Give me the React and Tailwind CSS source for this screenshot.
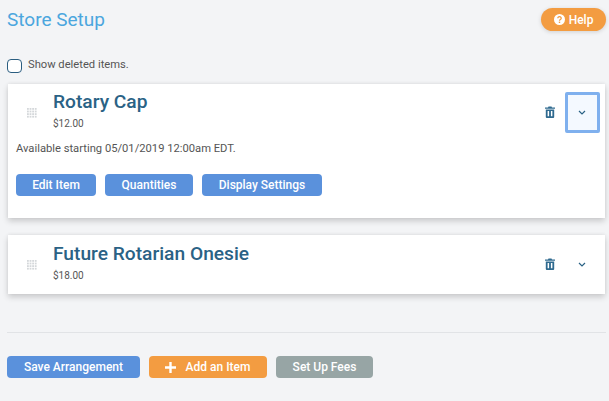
import React from "react";

function Grip() {
  const dots = [];
  for (let y = 0; y < 4; y++) for (let x = 0; x < 4; x++) dots.push(<rect key={`${x}-${y}`} x={x * 2.600} y={y * 2.600} width="1.800" height="1.800" fill="#d4d7da" />);
  return <svg width="10" height="10" viewBox="0 0 10 10" className="block">{dots}</svg>;
}

function Trash() {
  return (
    <svg width="10" height="12" viewBox="0 0 10 12" className="block">
      <path d="M3.500 0.500h3l.5 1H10v1.200H0V1.500h3z" fill="#2f6a8f" />
      <path fillRule="evenodd" d="M.8 3.400h8.400V11a1 1 0 0 1-1 1H1.800a1 1 0 0 1-1-1zM2.600 5v5.300h1.500V5zM5.900 5v5.300h1.500V5z" fill="#2f6a8f" />
    </svg>
  );
}

function Chevron() {
  return (
    <svg width="8" height="5" viewBox="0 0 8 5" className="block">
      <path d="M1 1l3 3 3-3" fill="none" stroke="#2a6285" strokeWidth="1.200" />
    </svg>
  );
}

function Card({ name, price, open, children }) {
  return (
    <div className="bg-white ml-2 mr-1 shadow-[0_3px_6px_rgba(0,0,0,0.18),0_-1px_3px_rgba(0,0,0,0.05)]">
      <div className={open ? "flex items-center h-[59px] pb-[2px]" : "flex items-center h-[59px]"}>
        <div className="w-[45px] pl-[19px] shrink-0"><Grip /></div>
        <div className="flex-1 min-w-0 pb-[5px]">
          <div className="text-[19.200px] leading-[24px] pt-px font-medium text-[#2a6285]">{name}</div>
          <div className="text-[10px] leading-[14px] mt-[3px] text-[#555555]">{price}</div>
        </div>
        <div className="mr-[10px] -mt-[2px]"><Trash /></div>
        <div className={open
          ? "w-[35px] h-[41px] mr-[5px] pr-px flex items-center justify-center bg-[#f4f9ff] border-[3px] border-[#7fb0ee] rounded-[2px]"
          : "w-[35px] h-[41px] mr-[5px] pr-px flex items-center justify-center"}><Chevron /></div>
      </div>
      {children}
    </div>
  );
}

function Btn({ className, children }) {
  return <div className={`h-[22px] flex items-center justify-center rounded-[4px] text-white text-[12px] font-medium ${className}`}>{children}</div>;
}

export default function App() {
  return (
    <div className="w-[609px] h-[401px] overflow-hidden bg-[#f3f4f6] font-['Roboto',sans-serif] flex flex-col">
      <div className="flex items-start justify-between h-[59px] pl-[7px] pr-[3px] pt-2">
        <div className="text-[19px] leading-[23px] text-[#4ba6de]">Store Setup</div>
        <div className="w-[65px] h-[23px] rounded-full bg-[#f39c41] text-white text-[12px] font-medium flex items-center justify-center gap-1 shadow-[0_1px_4px_rgba(0,0,0,0.15)]">
          <svg width="11" height="11" viewBox="0 0 11 11">
            <circle cx="5.500" cy="5.500" r="5.500" fill="#fff" />
            <path d="M3.800 4.200a1.700 1.500 0 1 1 2.600 1.300c-.6.4-.9.6-.9 1.200" fill="none" stroke="#f39c41" strokeWidth="1.300" />
            <rect x="4.800" y="7.600" width="1.400" height="1.400" fill="#f39c41" />
          </svg>
          Help
        </div>
      </div>
      <div className="flex items-center h-[14px] pl-[7px] gap-[6px]">
        <div className="w-[15px] h-[14px] rounded-[4px] border border-[#2a5d80] bg-white" />
        <div className="text-[11.200px] leading-[14px] -mt-[2px] text-[#555555]">Show deleted items.</div>
      </div>
      <div className="h-[11px] shrink-0" />
      <Card name="Rotary Cap" price="$12.00" open>
        <div className="pl-2 pb-[22px]">
          <div className="text-[11.200px] leading-[14px] text-[#555555] mt-[-1px]">Available starting 05/01/2019 12:00am EDT.</div>
          <div className="flex gap-[9px] mt-[18px]">
            <Btn className="w-[80px] bg-[#5a91dc]">Edit Item</Btn>
            <Btn className="w-[88px] bg-[#5a91dc]">Quantities</Btn>
            <Btn className="w-[120px] bg-[#5a91dc]">Display Settings</Btn>
          </div>
        </div>
      </Card>
      <div className="h-[17px] shrink-0" />
      <Card name="Future Rotarian Onesie" price="$18.00" />
      <div className="h-px bg-[#e1e3e6] ml-[7px] mr-[3px] mt-[38px]" />
      <div className="flex gap-[9px] pl-[7px] mt-[23px]">
        <Btn className="w-[133px] bg-[#5a91dc]">Save Arrangement</Btn>
        <Btn className="w-[118px] bg-[#f39c41] gap-[10px] pr-px">
          <svg width="11" height="11" viewBox="0 0 11 11"><path d="M4.300 0h2.400v4.300H11v2.400H6.700V11H4.300V6.700H0V4.300h4.300z" fill="#fff" /></svg>
          Add an Item
        </Btn>
        <Btn className="w-[97px] bg-[#97a5a5]">Set Up Fees</Btn>
      </div>
    </div>
  );
}
